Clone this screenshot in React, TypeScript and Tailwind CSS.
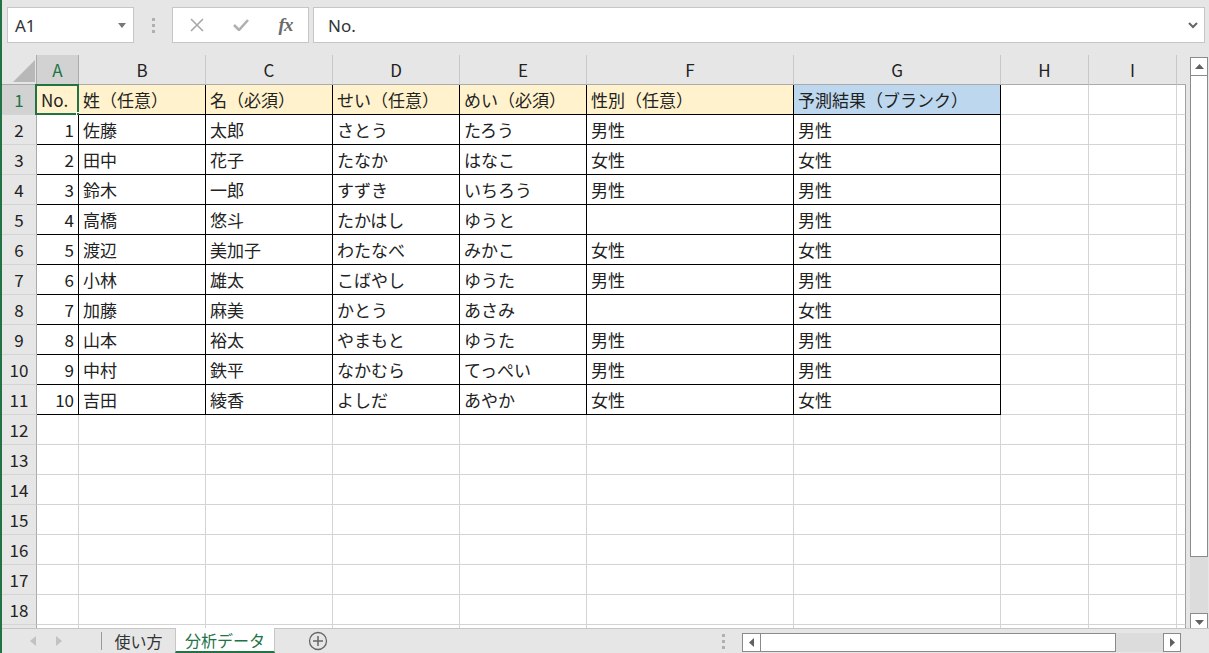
import React from 'react';

const cols = [
  { key: 'A', w: 'w-[42px]' },
  { key: 'B', w: 'w-[127px]' },
  { key: 'C', w: 'w-[127px]' },
  { key: 'D', w: 'w-[127px]' },
  { key: 'E', w: 'w-[127px]' },
  { key: 'F', w: 'w-[207px]' },
  { key: 'G', w: 'w-[207px]' },
  { key: 'H', w: 'w-[88px]' },
  { key: 'I', w: 'w-[88px]' },
];

const rows: string[][] = [
  ['No.', '姓（任意）', '名（必須）', 'せい（任意）', 'めい（必須）', '性別（任意）', '予測結果（ブランク）'],
  ['1', '佐藤', '太郎', 'さとう', 'たろう', '男性', '男性'],
  ['2', '田中', '花子', 'たなか', 'はなこ', '女性', '女性'],
  ['3', '鈴木', '一郎', 'すずき', 'いちろう', '男性', '男性'],
  ['4', '高橋', '悠斗', 'たかはし', 'ゆうと', '', '男性'],
  ['5', '渡辺', '美加子', 'わたなべ', 'みかこ', '女性', '女性'],
  ['6', '小林', '雄太', 'こばやし', 'ゆうた', '男性', '男性'],
  ['7', '加藤', '麻美', 'かとう', 'あさみ', '', '女性'],
  ['8', '山本', '裕太', 'やまもと', 'ゆうた', '男性', '男性'],
  ['9', '中村', '鉄平', 'なかむら', 'てっぺい', '男性', '男性'],
  ['10', '吉田', '綾香', 'よしだ', 'あやか', '女性', '女性'],
];

// 18 full rows, plus the top sliver of row 19
const TOTAL_ROWS = 19;

const FormulaBar = () => (
  <div className="flex h-[55px] shrink-0 items-start pt-[7px] pl-[5px] pr-[4px]">
    {/* name box */}
    <div className="flex h-[36px] w-[127px] items-center justify-between border border-[#c6c6c6] bg-white pl-[7px] pr-[7px]">
      <span className="font-['Noto_Sans',sans-serif] text-[17px] text-[#333] pt-[2px]">A1</span>
      <svg width="8" height="5" viewBox="0 0 8 5">
        <path d="M0 0 L8 0 L4 5 Z" fill="#777" />
      </svg>
    </div>
    <div className="flex h-[36px] w-[38px] flex-col items-center justify-center gap-[3px]">
      <span className="block h-[3px] w-[3px] bg-[#b0b0b0]" />
      <span className="block h-[3px] w-[3px] bg-[#b0b0b0]" />
      <span className="block h-[3px] w-[3px] bg-[#b0b0b0]" />
    </div>
    <div className="flex h-[36px] w-[137px] items-center border border-[#c6c6c6] bg-white">
      <div className="flex w-[45px] justify-center pl-[2px]">
        <svg width="14" height="14" viewBox="0 0 14 14">
          <path d="M1 1 L13 13 M13 1 L1 13" stroke="#a8a8a8" strokeWidth="1.6" />
        </svg>
      </div>
      <div className="flex w-[45px] justify-center">
        <svg width="16" height="12" viewBox="0 0 16 12">
          <path d="M1 6 L6 11 L15 1" stroke="#b0b0b0" strokeWidth="2.6" fill="none" />
        </svg>
      </div>
      <div className="flex w-[45px] justify-center">
        <span className="font-['Liberation_Serif',serif] text-[19px] italic font-bold text-[#6a6a6a] tracking-[-1px]">fx</span>
      </div>
    </div>
    <div className="ml-[4px] flex h-[36px] flex-1 items-center justify-between border border-[#c6c6c6] bg-white pl-[14px] pr-[6px]">
      <span className="font-['Noto_Sans',sans-serif] text-[17px] text-[#333] pt-[1px]">No.</span>
      <svg width="10" height="7" viewBox="0 0 10 7">
        <path d="M1 1 L5 5 L9 1" stroke="#666" strokeWidth="2" fill="none" />
      </svg>
    </div>
  </div>
);

const Grid = () => (
  <div className="flex flex-col font-['Noto_Sans_CJK_JP',sans-serif] text-[17px] text-[#222]">
    {/* column header */}
    <div className="flex h-[30px] shrink-0">
      <div className="relative w-[35px] border-r border-b border-[#ababab] bg-[#e6e6e6]">
        <svg className="absolute left-[11px] top-[5px]" width="22" height="22" viewBox="0 0 22 22">
          <path d="M22 0 L22 22 L0 22 Z" fill="#b8b8b8" />
        </svg>
      </div>
      {cols.map((c) => (
        <div
          key={c.key}
          className={`${c.w} flex items-center justify-center border-r border-b ${
            c.key === 'A' ? 'bg-[#d2d2d2] text-[#217346] border-r-[#ababab] border-b-[#ababab]' : 'bg-[#e6e6e6] border-r-[#c8c8c8] border-b-[#ababab]'
          }`}
        >
          <span className="pt-[1px]">{c.key}</span>
        </div>
      ))}
      <div className="w-[9px] border-b border-[#ababab] bg-[#e6e6e6]" />
    </div>
    {Array.from({ length: TOTAL_ROWS }).map((_, ri) => {
      const data = rows[ri];
      const sliver = ri === TOTAL_ROWS - 1;
      return (
        <div key={ri} className="flex h-[30px] shrink-0">
          <div
            className={`flex w-[35px] items-center justify-center border-r border-b border-r-[#ababab] border-b-[#d4d4d4] ${
              ri === 0 ? 'bg-[#d2d2d2] text-[#217346]' : 'bg-[#e6e6e6]'
            }`}
          >
            <span className="pt-[1px]">{sliver ? '' : ri + 1}</span>
          </div>
          {cols.map((c, ci) => {
            const inTable = ri < rows.length && ci < 7;
            const val = inTable ? data[ci] : '';
            let bg = 'bg-white';
            if (ri === 0 && ci < 6) bg = 'bg-[#fff2cc]';
            if (ri === 0 && ci === 6) bg = 'bg-[#bdd7ee]';
            const align = ci === 0 && ri > 0 ? 'justify-end pr-[4px]' : 'justify-start pl-[4px]';
            return (
              <div
                key={c.key}
                className={`${c.w} relative flex items-center whitespace-nowrap border-r border-b ${bg} ${align} ${
                  inTable ? 'border-black' : 'border-[#d4d4d4]'
                }`}
              >
                <span className="pt-[1px]">{val}</span>
                {ri === 0 && ci === 0 && (
                  <>
                    <div className="absolute left-[-2px] top-[-1px] h-[31px] w-[44px] border-2 border-[#217346]" />
                    <div className="absolute right-[-4px] bottom-[-4px] h-[6px] w-[6px] border border-white bg-[#217346]" />
                  </>
                )}
              </div>
            );
          })}
          <div className="w-[9px] border-r border-b border-r-[#a0a0a0] border-b-[#d4d4d4] bg-white" />
        </div>
      );
    })}
  </div>
);

const VScroll = () => (
  <div className="ml-[4px] mt-[2px] flex h-[575px] w-[18px] shrink-0 flex-col">
    <div className="flex h-[19px] shrink-0 items-center justify-center border border-[#8a8a8a] bg-white">
      <svg width="9" height="5" viewBox="0 0 9 5">
        <path d="M0 5 L4.5 0 L9 5 Z" fill="#606060" />
      </svg>
    </div>
    <div className="h-[481px] shrink-0 border-x border-b border-[#8a8a8a] bg-white" />
    <div className="flex-1 bg-[#dcdcdc]" />
    <div className="flex h-[19px] shrink-0 items-center justify-center border border-[#8a8a8a] bg-white">
      <svg width="9" height="5" viewBox="0 0 9 5">
        <path d="M0 0 L9 0 L4.5 5 Z" fill="#606060" />
      </svg>
    </div>
  </div>
);

const BottomBar = () => (
  <div className="flex h-[25px] shrink-0 items-stretch border-t border-[#c6c6c6] bg-[#e6e6e6]">
    <div className="flex w-[99px] items-center pl-[28px] gap-[20px]">
      <svg width="6" height="10" viewBox="0 0 6 10">
        <path d="M6 0 L6 10 L0 5 Z" fill="#c2c2c2" />
      </svg>
      <svg width="6" height="10" viewBox="0 0 6 10">
        <path d="M0 0 L0 10 L6 5 Z" fill="#c2c2c2" />
      </svg>
    </div>
    <div className="my-[3px] w-px bg-[#9a9a9a]" />
    <div className="flex w-[73px] items-center justify-center font-['Noto_Sans_CJK_JP',sans-serif] text-[16px] text-[#333]">
      使い方
    </div>
    <div className="mt-[-1px] flex w-[100px] items-center justify-center border-x border-[#c6c6c6] border-b-2 border-b-[#217346] bg-white font-['Noto_Sans_CJK_JP',sans-serif] text-[16px] text-[#217346]">
      分析データ
    </div>
    <div className="flex w-[86px] items-center justify-center">
      <svg width="20" height="20" viewBox="0 0 20 20">
        <circle cx="10" cy="10" r="8.5" stroke="#666" strokeWidth="1.3" fill="none" />
        <path d="M10 5 L10 15 M5 10 L15 10" stroke="#666" strokeWidth="1.5" />
      </svg>
    </div>
    <div className="flex-1" />
    <div className="flex w-[40px] flex-col items-center justify-center gap-[3px] pl-[2px]">
      <span className="block h-[3px] w-[3px] bg-[#b0b0b0]" />
      <span className="block h-[3px] w-[3px] bg-[#b0b0b0]" />
      <span className="block h-[3px] w-[3px] bg-[#b0b0b0]" />
    </div>
    <div className="mt-[4px] flex h-[19px]">
      <div className="flex w-[19px] items-center justify-center border border-[#8a8a8a] bg-white">
        <svg width="5" height="9" viewBox="0 0 5 9">
          <path d="M5 0 L5 9 L0 4.5 Z" fill="#606060" />
        </svg>
      </div>
      <div className="w-[355px] border-y border-r border-[#8a8a8a] bg-white" />
      <div className="w-[47px] bg-[#dcdcdc]" />
      <div className="flex w-[18px] items-center justify-center border border-[#8a8a8a] bg-white">
        <svg width="5" height="9" viewBox="0 0 5 9">
          <path d="M0 0 L0 9 L5 4.5 Z" fill="#606060" />
        </svg>
      </div>
    </div>
    <div className="w-[28px]" />
  </div>
);

export default function App() {
  return (
    <div className="flex h-[653px] w-[1209px] flex-col overflow-hidden border-l-2 border-[#217346] bg-[#e6e6e6]">
      <FormulaBar />
      <div className="flex h-[573px] shrink-0 overflow-hidden">
        <Grid />
        <VScroll />
      </div>
      <BottomBar />
    </div>
  );
}
